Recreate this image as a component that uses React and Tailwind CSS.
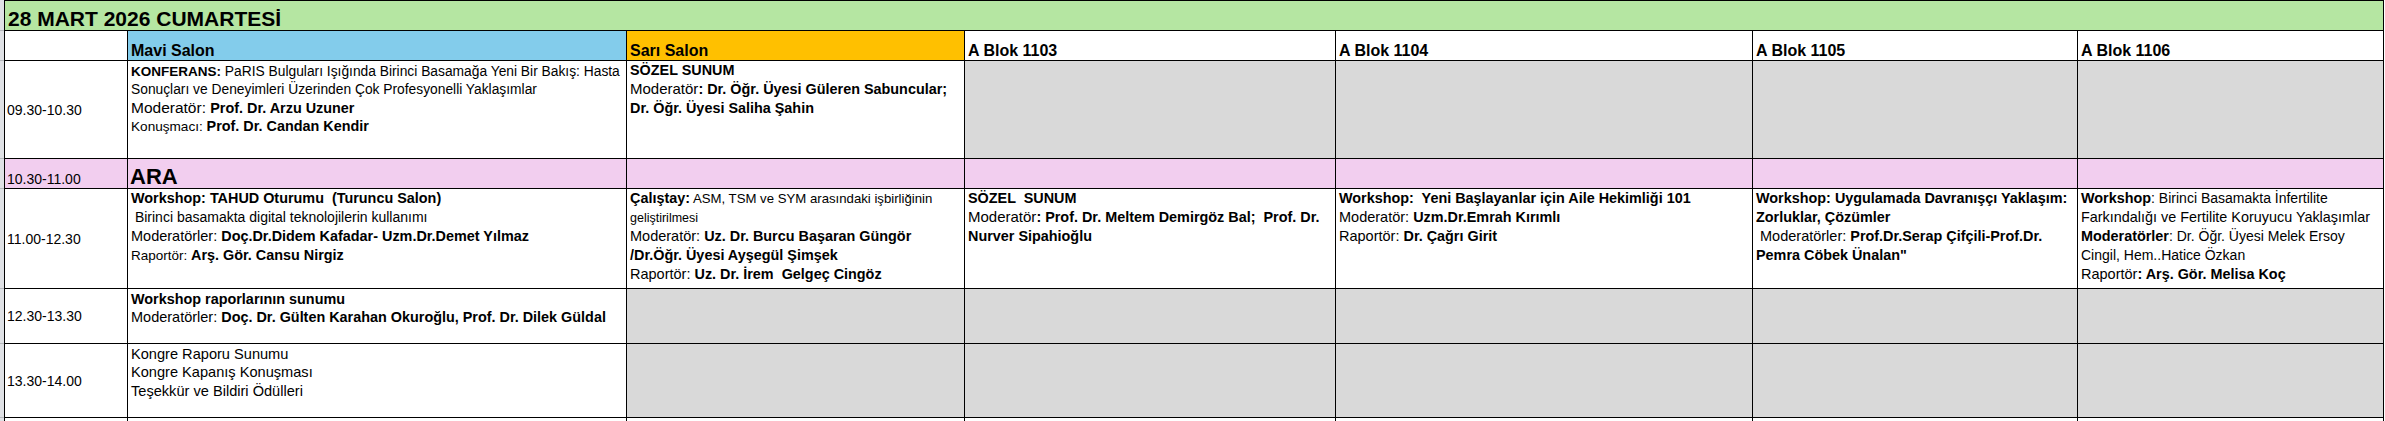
import React from 'react';

const Line = ({ children }) => <div className="whitespace-pre">{children}</div>;
const B = ({ children }) => <span className="font-bold text-[14.4px] leading-none">{children}</span>;
const N = ({ children, size = 'text-[14.5px]' }) => (
    <span className={`${size} leading-none font-['Liberation_Sans_Narrow','Arial_Narrow','Liberation_Sans',sans-serif]`}>
        {children}
    </span>
);

const Cell = ({ children, tight = false }) => (
    <div
        className={`bg-white px-[3px] text-[14px] overflow-hidden ${
            tight ? 'leading-[18.3px] pt-[1px]' : 'leading-[19px]'
        }`}
    >
        {children}
    </div>
);

const Time = ({ children }) => (
    <div className="bg-white flex items-center pl-[2px] text-[14px] leading-[18px]">{children}</div>
);

const Head = ({ children, bg = 'bg-white' }) => (
    <div className={`${bg} flex items-end px-[3px] font-bold text-[16px] leading-[18px] whitespace-nowrap`}>
        {children}
    </div>
);

const Gray = () => <div className="bg-[#d9d9d9]" />;
const Pink = () => <div className="bg-[#f2ceef]" />;

export default function App() {
    return (
        <div className="flex w-[2385px] h-[421px] overflow-hidden bg-white text-black font-['Liberation_Sans',Arial,sans-serif]">
            {/* spreadsheet edge */}
            <div className="w-[4px] flex flex-col bg-[#dfe1e5] shrink-0">
                <div className="h-[31px] border-b border-[#b4b7bb]" />
                <div className="h-[30px] border-b border-[#b4b7bb]" />
                <div className="h-[98px] border-b border-[#b4b7bb]" />
                <div className="h-[30px] border-b border-[#b4b7bb]" />
                <div className="h-[100px] border-b border-[#b4b7bb]" />
                <div className="h-[55px] border-b border-[#b4b7bb]" />
                <div className="h-[74px] border-b border-[#b4b7bb]" />
            </div>

            <div className="grid grid-cols-[122px_498px_337px_370px_416px_324px_305px] grid-rows-[29px_29px_97px_29px_99px_54px_73px_40px] gap-px bg-black border border-black self-start shrink-0">
                {/* Title */}
                <div className="col-span-7 bg-[#b5e6a2] flex items-end pl-[3px] font-bold text-[21px] leading-[22px]">
                    28 MART 2026 CUMARTESİ
                </div>

                {/* Salons */}
                <Head />
                <Head bg="bg-[#83cceb]">Mavi Salon</Head>
                <Head bg="bg-[#ffc000]">Sarı Salon</Head>
                <Head>A Blok 1103</Head>
                <Head>A Blok 1104</Head>
                <Head>A Blok 1105</Head>
                <Head>A Blok 1106</Head>

                {/* 09.30-10.30 */}
                <Time>09.30-10.30</Time>
                <Cell tight>
                    <Line>
                        <span className="font-bold text-[13.5px] leading-none">KONFERANS:</span>
                        <span className="text-[13.8px] leading-none"> PaRIS Bulguları Işığında Birinci Basamağa Yeni Bir Bakış: Hasta</span>
                    </Line>
                    <Line><span className="text-[13.8px] leading-none">Sonuçları ve Deneyimleri Üzerinden Çok Profesyonelli Yaklaşımlar</span></Line>
                    <Line><N size="text-[15.5px]">Moderatör: </N><B>Prof. Dr. Arzu Uzuner</B></Line>
                    <Line><span className="text-[13.6px] leading-none">Konuşmacı: </span><B>Prof. Dr. Candan Kendir</B></Line>
                </Cell>
                <Cell>
                    <Line><B>SÖZEL SUNUM</B></Line>
                    <Line><N size="text-[15px]">Moderatör</N><B>: Dr. Öğr. Üyesi Güleren Sabuncular;</B></Line>
                    <Line><B>Dr. Öğr. Üyesi Saliha Şahin</B></Line>
                </Cell>
                <Gray />
                <Gray />
                <Gray />
                <Gray />

                {/* Ara */}
                <div className="bg-[#f2ceef] flex items-end pl-[2px] text-[14px] leading-[18px]">10.30-11.00</div>
                <div className="bg-[#f2ceef] flex items-end pl-[2px] font-bold text-[22px] leading-[22px]">ARA</div>
                <Pink />
                <Pink />
                <Pink />
                <Pink />
                <Pink />

                {/* 11.00-12.30 */}
                <Time>11.00-12.30</Time>
                <Cell>
                    <Line><B>Workshop: TAHUD Oturumu  (Turuncu Salon)</B></Line>
                    <Line> Birinci basamakta digital teknolojilerin kullanımı</Line>
                    <Line><N>Moderatörler: </N><B>Doç.Dr.Didem Kafadar- Uzm.Dr.Demet Yılmaz</B></Line>
                    <Line><span className="text-[13.5px] leading-none">Raportör: </span><B>Arş. Gör. Cansu Nirgiz</B></Line>
                </Cell>
                <Cell>
                    <Line><B>Çalıştay:</B><span className="text-[13.2px] leading-none"> ASM, TSM ve SYM arasındaki işbirliğinin</span></Line>
                    <Line><N size="text-[12.5px]">geliştirilmesi</N></Line>
                    <Line><N>Moderatör: </N><B>Uz. Dr. Burcu Başaran Güngör</B></Line>
                    <Line><B>/Dr.Öğr. Üyesi Ayşegül Şimşek</B></Line>
                    <Line><N>Raportör: </N><B>Uz. Dr. İrem  Gelgeç Cingöz</B></Line>
                </Cell>
                <Cell>
                    <Line><B>SÖZEL  SUNUM</B></Line>
                    <Line><N size="text-[15px]">Moderatör</N><B>: Prof. Dr. Meltem Demirgöz Bal;  Prof. Dr.</B></Line>
                    <Line><B>Nurver Sipahioğlu</B></Line>
                </Cell>
                <Cell>
                    <Line><B>Workshop:  Yeni Başlayanlar için Aile Hekimliği 101</B></Line>
                    <Line><N>Moderatör: </N><B>Uzm.Dr.Emrah Kırımlı</B></Line>
                    <Line><N>Raportör: </N><B>Dr. Çağrı Girit</B></Line>
                </Cell>
                <Cell>
                    <Line><B>Workshop: Uygulamada Davranışçı Yaklaşım:</B></Line>
                    <Line><B>Zorluklar, Çözümler</B></Line>
                    <Line><N> Moderatörler: </N><B>Prof.Dr.Serap Çifçili-Prof.Dr.</B></Line>
                    <Line><B>Pemra Cöbek Ünalan"</B></Line>
                </Cell>
                <Cell>
                    <Line><B>Workshop</B>: Birinci Basamakta İnfertilite</Line>
                    <Line><span className="text-[14.4px] leading-none">Farkındalığı ve Fertilite Koruyucu Yaklaşımlar</span></Line>
                    <Line><B>Moderatörler</B>: Dr. Öğr. Üyesi Melek Ersoy</Line>
                    <Line>Cingil, Hem..Hatice Özkan</Line>
                    <Line><N>Raportör</N><B>: Arş. Gör. Melisa Koç</B></Line>
                </Cell>

                {/* 12.30-13.30 */}
                <Time>12.30-13.30</Time>
                <Cell tight>
                    <Line><B>Workshop raporlarının sunumu</B></Line>
                    <Line><N>Moderatörler: </N><B>Doç. Dr. Gülten Karahan Okuroğlu, Prof. Dr. Dilek Güldal</B></Line>
                </Cell>
                <Gray />
                <Gray />
                <Gray />
                <Gray />
                <Gray />

                {/* 13.30-14.00 */}
                <Time>13.30-14.00</Time>
                <Cell tight>
                    <Line><span className="text-[14.6px] leading-none">Kongre Raporu Sunumu</span></Line>
                    <Line><span className="text-[14.6px] leading-none">Kongre Kapanış Konuşması</span></Line>
                    <Line><span className="text-[14.6px] leading-none">Teşekkür ve Bildiri Ödülleri</span></Line>
                </Cell>
                <Gray />
                <Gray />
                <Gray />
                <Gray />
                <Gray />

                {/* next row, cut off */}
                <div className="bg-white" />
                <div className="bg-white" />
                <div className="bg-white" />
                <div className="bg-white" />
                <div className="bg-white" />
                <div className="bg-white" />
                <div className="bg-white" />
            </div>
        </div>
    );
}
